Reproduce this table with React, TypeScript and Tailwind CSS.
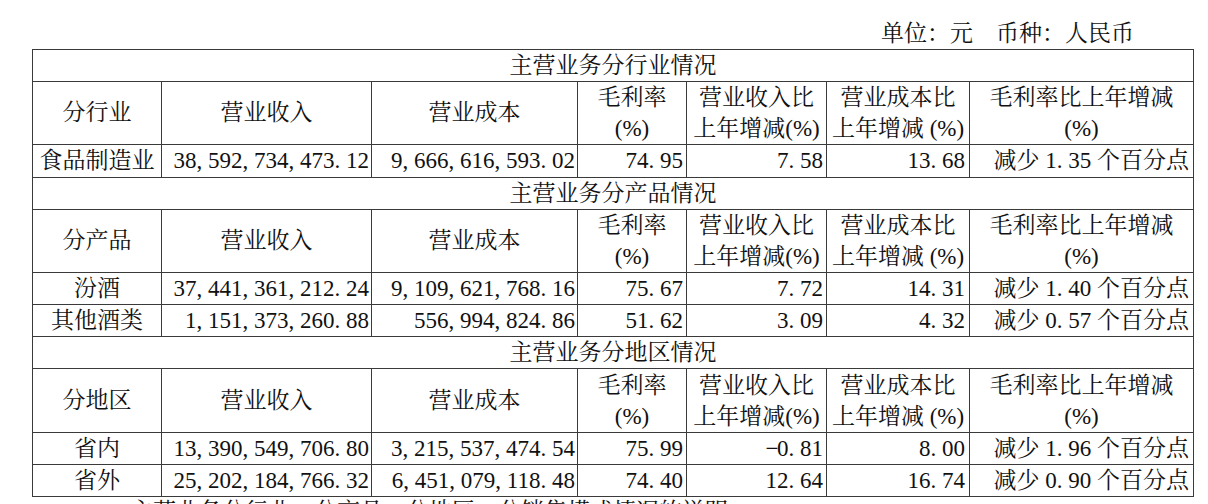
import React from "react";

type Row = string[];
type Section = { title: string; label: string; rows: Row[]; headH: string };

const sections: Section[] = [
  {
    title: "主营业务分行业情况",
    label: "分行业",
    headH: "h-[63px]",
    rows: [["食品制造业", "38,592,734,473.12", "9,666,616,593.02", "74.95", "7.58", "13.68", "减少 1.35 个百分点"]],
  },
  {
    title: "主营业务分产品情况",
    label: "分产品",
    headH: "h-[63px]",
    rows: [
      ["汾酒", "37,441,361,212.24", "9,109,621,768.16", "75.67", "7.72", "14.31", "减少 1.40 个百分点"],
      ["其他酒类", "1,151,373,260.88", "556,994,824.86", "51.62", "3.09", "4.32", "减少 0.57 个百分点"],
    ],
  },
  {
    title: "主营业务分地区情况",
    label: "分地区",
    headH: "h-[64px]",
    rows: [
      ["省内", "13,390,549,706.80", "3,215,537,474.54", "75.99", "-0.81", "8.00", "减少 1.96 个百分点"],
      ["省外", "25,202,184,766.32", "6,451,079,118.48", "74.40", "12.64", "16.74", "减少 0.90 个百分点"],
    ],
  },
];

const cell = "border border-[#3a3a3a] p-0 align-middle";

function Num({ v }: { v: string }) {
  return (
    <>
      {v.split("").map((c, i) =>
        c === "," || c === "." ? (
          <span key={i} className="inline-block w-[11.5px] text-left">
            {c}
          </span>
        ) : c === "-" ? (
          <span key={i} className="inline-block w-[11.5px] text-center">
            −
          </span>
        ) : (
          <React.Fragment key={i}>{c}</React.Fragment>
        )
      )}
    </>
  );
}

export default function App() {
  return (
    <div className="w-[1208px] h-[504px] overflow-hidden bg-white text-[#111] font-['Liberation_Serif','Noto_Serif_CJK_SC','Noto_Sans_CJK_SC',serif] text-[23px]">
      <div className="h-[49px] flex items-end justify-end pr-[74px]">
        <div className="leading-[30px] whitespace-pre">单位：元　币种：人民币</div>
      </div>
      <table className="table-fixed border-collapse w-[1161px] ml-[32px]">
        <colgroup>
          <col className="w-[129px]" />
          <col className="w-[210px]" />
          <col className="w-[206px]" />
          <col className="w-[109px]" />
          <col className="w-[140px]" />
          <col className="w-[143px]" />
          <col className="w-[224px]" />
        </colgroup>
        <tbody>
          {sections.map((s) => (
            <React.Fragment key={s.title}>
              <tr className="h-[32px]">
                <td colSpan={7} className={`${cell} text-center leading-[30px]`}>
                  {s.title}
                </td>
              </tr>
              <tr className={s.headH}>
                <td className={`${cell} text-center leading-[30px]`}>{s.label}</td>
                <td className={`${cell} text-center leading-[30px]`}>营业收入</td>
                <td className={`${cell} text-center leading-[30px]`}>营业成本</td>
                <td className={`${cell} text-center leading-[31px]`}>
                  <div>毛利率</div>
                  <div>(%)</div>
                </td>
                <td className={`${cell} text-center leading-[31px] whitespace-nowrap`}>
                  <div>营业收入比</div>
                  <div>上年增减(%)</div>
                </td>
                <td className={`${cell} text-center leading-[31px] whitespace-nowrap`}>
                  <div>营业成本比</div>
                  <div>上年增减 (%)</div>
                </td>
                <td className={`${cell} text-center leading-[31px]`}>
                  <div>毛利率比上年增减</div>
                  <div>(%)</div>
                </td>
              </tr>
              {s.rows.map((r, i) => (
                <tr key={i} className={s.title === "主营业务分行业情况" ? "h-[33px]" : "h-[32px]"}>
                  <td className={`${cell} text-center leading-[30px] whitespace-nowrap`}>{r[0]}</td>
                  <td className={`${cell} text-right pr-[2px] leading-[30px] whitespace-nowrap`}>
                    <Num v={r[1]} />
                  </td>
                  <td className={`${cell} text-right pr-[2px] leading-[30px] whitespace-nowrap`}>
                    <Num v={r[2]} />
                  </td>
                  <td className={`${cell} text-right pr-[3px] leading-[30px] whitespace-nowrap`}>
                    <Num v={r[3]} />
                  </td>
                  <td className={`${cell} text-right pr-[3px] leading-[30px] whitespace-nowrap`}>
                    <Num v={r[4]} />
                  </td>
                  <td className={`${cell} text-right pr-[4px] leading-[30px] whitespace-nowrap`}>
                    <Num v={r[5]} />
                  </td>
                  <td className={`${cell} text-right pr-[4px] leading-[30px] whitespace-nowrap`}>
                    <Num v={r[6]} />
                  </td>
                </tr>
              ))}
            </React.Fragment>
          ))}
        </tbody>
      </table>
      <div className="pl-[130px] pt-[3px] leading-[23px] whitespace-nowrap">
        主营业务分行业、分产品、分地区、分销售模式情况的说明
      </div>
    </div>
  );
}
